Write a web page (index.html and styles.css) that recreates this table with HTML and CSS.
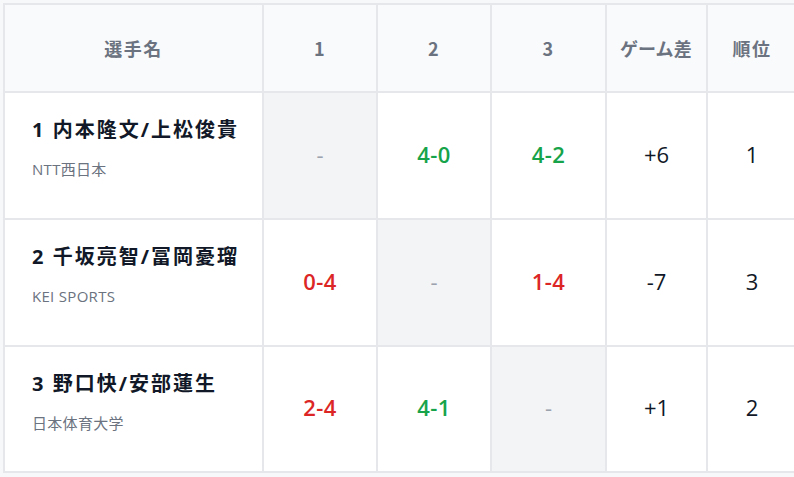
FILE: index.html
```html
<!DOCTYPE html>
<html lang="ja">
<head>
<meta charset="utf-8">
<link rel="stylesheet" href="styles.css">
</head>
<body>
<div class="frame">
  <div class="grid">
    <div class="hd">選手名</div>
    <div class="hd">1</div>
    <div class="hd">2</div>
    <div class="hd">3</div>
    <div class="hd palt">ゲーム差</div>
    <div class="hd">順位</div>

    <div class="player">
      <div class="name">1 内本隆文/上松俊貴</div>
      <div class="team">NTT西日本</div>
    </div>
    <div class="cell self"><span class="dash">-</span></div>
    <div class="cell win">4-0</div>
    <div class="cell win">4-2</div>
    <div class="cell num">+6</div>
    <div class="cell num">1</div>

    <div class="player">
      <div class="name">2 千坂亮智/冨岡憂瑠</div>
      <div class="team">KEI SPORTS</div>
    </div>
    <div class="cell lose">0-4</div>
    <div class="cell self"><span class="dash">-</span></div>
    <div class="cell lose">1-4</div>
    <div class="cell num">-7</div>
    <div class="cell num">3</div>

    <div class="player">
      <div class="name">3 野口快/安部蓮生</div>
      <div class="team">日本体育大学</div>
    </div>
    <div class="cell lose">2-4</div>
    <div class="cell win">4-1</div>
    <div class="cell self"><span class="dash">-</span></div>
    <div class="cell num">+1</div>
    <div class="cell num">2</div>
  </div>
</div>
</body>
</html>
```

FILE: styles.css
```css
html, body {
  margin: 0;
  padding: 0;
  overflow: hidden;
  background: #f7f8fa;
}
body {
  font-family: "Open Sans", "Noto Sans CJK JP", sans-serif;
  width: 794px;
  height: 477px;
}
.frame {
  padding: 3px 0 0 3px;
  overflow: hidden;
}
.grid {
  display: grid;
  width: max-content;
  grid-template-columns: 257px 112px 112px 113px 99px 88px;
  grid-template-rows: 86px 125px 125px 124px;
  gap: 2px;
  padding: 2px;
  background: #e5e7eb;
}
.hd {
  background: #f9fafb;
  color: #6b7280;
  font-family: "Noto Sans CJK JP", sans-serif;
  font-weight: 700;
  font-size: 18px;
  letter-spacing: 1.5px;
  display: flex;
  align-items: center;
  justify-content: center;
}
.palt {
  font-feature-settings: "palt";
  letter-spacing: 1px;
}
.player {
  background: #fff;
  padding: 23px 0 0 27px;
}
.name {
  font-family: "Open Sans", "Noto Sans CJK JP", sans-serif;
  font-weight: 700;
  font-size: 20px;
  line-height: 28px;
  letter-spacing: 2px;
  color: #111827;
}
.team {
  margin-top: 15px;
  font-size: 15px;
  line-height: 20px;
  letter-spacing: 0.3px;
  color: #6b7280;
}
.cell {
  background: #fff;
  display: flex;
  align-items: center;
  justify-content: center;
  padding-bottom: 4px;
  font-size: 22px;
  color: #111827;
}
.cell.self {
  background: #f3f4f6;
}
.dash {
  color: #9ca3af;
  font-size: 22px;
}
.win {
  color: #16a34a;
  font-weight: 600;
  letter-spacing: 0.5px;
}
.lose {
  color: #dc2626;
  font-weight: 600;
  letter-spacing: 0.5px;
}
.num {
  font-weight: 400;
}
```
